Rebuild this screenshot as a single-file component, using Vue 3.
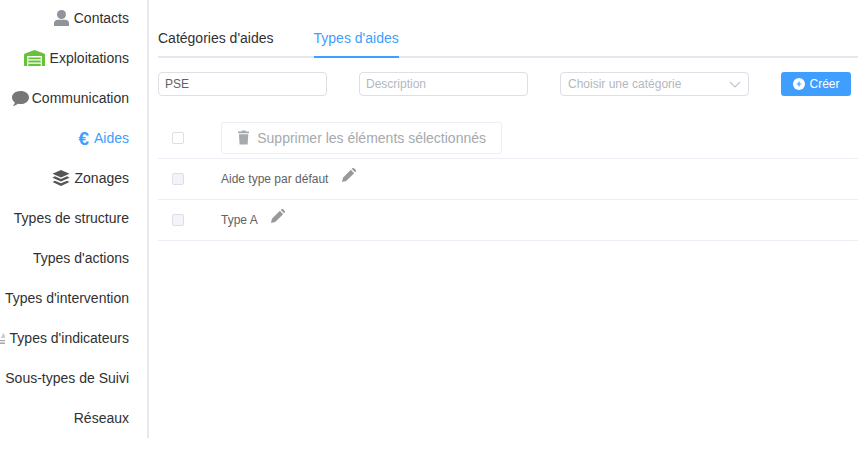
<template>
  <div class="page">
    <nav class="side">
      <ul class="menu">
        <li v-for="item in menu" :key="item.label" class="menu-item" :class="{ active: item.active }">
          <svg v-if="item.icon === 'user'" class="ic" width="15" height="16" viewBox="0 0 15 16">
            <circle cx="7.500" cy="4.500" r="4.500" fill="#909399" />
            <path d="M0 16v-2.800C0 11 1.800 9.800 3.600 9.800h7.800c1.800 0 3.600 1.200 3.600 3.400V16z" fill="#909399" />
          </svg>
          <svg v-else-if="item.icon === 'barn'" class="ic" width="21" height="16" viewBox="0 0 21 16">
            <path d="M0 16V5c0-.8.400-1.300 1-1.600L10.500 0 20 3.400c.6.300 1 .8 1 1.600v11h-3.200V6H3.200v10z" fill="#67c23a" />
            <path d="M4.300 7.400h12.400v1.900H4.300zM4.300 10.600h12.400v1.900H4.300zM4.300 13.800h12.400V16H4.300z" fill="#67c23a" />
          </svg>
          <svg v-else-if="item.icon === 'chat'" class="ic chat" width="17" height="15" viewBox="0 0 17 15">
            <path d="M8.500 0C3.800 0 0 2.800 0 6.400c0 2 1.100 3.700 2.800 4.900-.1 1.300-.9 2.700-2.100 3.700 2.100-.1 3.900-1 5.100-2.200.9.200 1.800.3 2.700.3 4.700 0 8.500-3 8.500-6.700S13.200 0 8.500 0z" fill="#777" />
          </svg>
          <span v-else-if="item.icon === 'euro'" class="ic euro">€</span>
          <svg v-else-if="item.icon === 'layers'" class="ic" width="18" height="16" viewBox="0 0 17 16">
            <path d="M8.500 0l8.500 3.700-8.500 3.700L0 3.700z" fill="#555" />
            <path d="M2.400 6.300l6.100 2.700 6.100-2.700L17 7.800l-8.500 3.800L0 7.800z" fill="#555" />
            <path d="M2.400 10.700l6.100 2.600 6.100-2.600 2.400 1.400L8.500 16 0 12.100z" fill="#555" />
          </svg>
          <svg v-else-if="item.icon === 'clipped'" class="ic" width="16" height="12" viewBox="0 0 16 12">
            <path d="M14 1l2 2.500V6h-4z" fill="#c8cbd0" />
            <path d="M10 8h6v1.200h-6zM10 10.500h6V12h-6z" fill="#a6a9ad" />
          </svg>
          <span>{{ item.label }}</span>
        </li>
      </ul>
    </nav>

    <main class="content">
      <div class="tabs">
        <div class="tab">Catégories d'aides</div>
        <div class="tab current">Types d'aides</div>
      </div>

      <form class="create" @submit.prevent>
        <input class="field name" value="PSE" />
        <input class="field name" placeholder="Description" />
        <div class="field select">
          <span>Choisir une catégorie</span>
          <svg width="12" height="7" viewBox="0 0 12 7"><path d="M1 1l5 5 5-5" fill="none" stroke="#c0c4cc" stroke-width="1.100" /></svg>
        </div>
        <button class="create-btn" type="submit">
          <svg width="12" height="12" viewBox="0 0 12 12">
            <circle cx="6" cy="6" r="6" fill="#fff" />
            <path d="M3.500 6h5M6 3.500v5" stroke="#409eff" stroke-width="1.200" />
          </svg>
          Créer
        </button>
      </form>

      <div class="row head">
        <div class="cell-check"><span class="box plain"></span></div>
        <button class="delete-btn" type="button">
          <svg width="12" height="15" viewBox="0 0 12 15">
            <path d="M4 0h4l.6 1.200H12v1.800H0V1.200h3.400zM1 4h10l-.7 11H1.700z" fill="#a6a9ad" />
          </svg>
          Supprimer les éléments sélectionnés
        </button>
      </div>

      <div v-for="t in types" :key="t" class="row">
        <div class="cell-check"><span class="box"></span></div>
        <span class="type-name">{{ t }}</span>
        <svg class="pencil" width="14" height="14" viewBox="0 0 15 15">
          <path d="M0 15l1-4.500L9.500 2l3.500 3.500L4.500 14zM10.500 1l1-1c.4-.3.900-.3 1.200 0l2.300 2.300c.3.300.3.800 0 1.200l-1 1z" fill="#999" />
        </svg>
      </div>
    </main>
  </div>
</template>

<script setup>
const menu = [
  { label: 'Contacts', icon: 'user' },
  { label: 'Exploitations', icon: 'barn' },
  { label: 'Communication', icon: 'chat' },
  { label: 'Aides', icon: 'euro', active: true },
  { label: 'Zonages', icon: 'layers' },
  { label: 'Types de structure' },
  { label: "Types d'actions" },
  { label: "Types d'intervention" },
  { label: "Types d'indicateurs", icon: 'clipped' },
  { label: 'Sous-types de Suivi' },
  { label: 'Réseaux' }
]
const types = ['Aide type par défaut', 'Type A']
</script>

<style scoped>
.page {
  display: flex;
  width: 858px;
  height: 452px;
  overflow: hidden;
  background: #fff;
  color: #303133;
  font-family: "Liberation Sans", Arial, sans-serif;
}
.side {
  flex: none;
  box-sizing: border-box;
  width: 149px;
  height: 438px;
  overflow: hidden;
  border-right: 2px solid #e6e9f0;
}
.menu {
  margin: -2px -2px 0 0;
  padding: 0;
  list-style: none;
}
.menu-item {
  position: relative;
  display: flex;
  justify-content: flex-end;
  align-items: center;
  gap: 5px;
  height: 40px;
  padding-right: 20px;
  font-size: 14px;
  white-space: nowrap;
}
.menu-item.active {
  color: #409eff;
}
.menu-item.active::after {
  content: "";
  position: absolute;
  top: 0;
  right: 0;
  width: 2px;
  height: 40px;
  background: #409eff;
}
.ic {
  flex: none;
}
.chat {
  margin-right: -2px;
  margin-top: 1px;
}
.euro {
  font-family: "Liberation Sans", Arial, sans-serif;
  font-size: 19px;
  font-weight: bold;
  line-height: 1;
}
.content {
  flex: 1;
  min-width: 0;
  padding: 18px 0 0 9px;
}
.tabs {
  display: flex;
  gap: 40px;
  height: 40px;
  box-shadow: inset 0 -2px 0 #e4e7ed;
}
.tab {
  box-sizing: border-box;
  height: 40px;
  line-height: 40px;
  font-size: 14px;
}
.tab.current {
  color: #409eff;
  border-bottom: 2px solid #409eff;
}
.create {
  display: flex;
  gap: 32px;
  margin-top: 14px;
  height: 24px;
}
.field {
  box-sizing: border-box;
  height: 24px;
  padding: 0 6px;
  border: 1px solid #dcdfe6;
  border-radius: 4px;
  background: #fff;
  color: #606266;
  font: 12px "Liberation Sans", Arial, sans-serif;
  outline: none;
}
.field::placeholder {
  color: #b4b8c0;
}
.name {
  width: 169px;
}
.select {
  display: flex;
  justify-content: space-between;
  align-items: center;
  width: 189px;
  padding: 0 7px;
  color: #b4b8c0;
}
.create-btn {
  display: flex;
  justify-content: center;
  align-items: center;
  gap: 4px;
  width: 70px;
  height: 24px;
  padding: 0 0 0 1px;
  border: 0;
  border-radius: 3px;
  background: #409eff;
  color: #fff;
  font: 12px "Liberation Sans", Arial, sans-serif;
}
.row {
  display: flex;
  align-items: center;
  box-sizing: border-box;
  height: 41px;
  border-bottom: 1px solid #ebeef5;
}
.row.head {
  height: 41px;
  margin-top: 22px;
  padding-bottom: 1px;
}
.cell-check {
  flex: none;
  width: 63px;
  padding-left: 14px;
  box-sizing: border-box;
  display: flex;
}
.box {
  box-sizing: border-box;
  width: 12px;
  height: 12px;
  border: 1px solid #dcdfe6;
  border-radius: 2px;
  background: #f2f4f9;
}
.box.plain {
  background: #fff;
}
.delete-btn {
  display: flex;
  align-items: center;
  gap: 8px;
  box-sizing: border-box;
  width: 281px;
  height: 32px;
  padding: 0 15px 0 16px;
  border: 1px solid #ebeef5;
  border-radius: 3px;
  background: #fff;
  color: #a6a9ad;
  font: 14px "Liberation Sans", Arial, sans-serif;
  white-space: nowrap;
}
.type-name {
  font-size: 12px;
  color: #606266;
}
.pencil {
  margin: -8px 0 0 13.500px;
}
</style>
